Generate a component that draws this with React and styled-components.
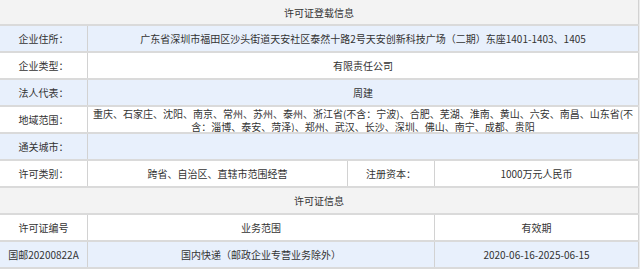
import styled, { createGlobalStyle } from "styled-components";

const GlobalStyle = createGlobalStyle`
  html, body {
    margin: 0;
    padding: 0;
    background: #ececec;
  }
  body {
    font-family: "Noto Sans CJK SC", "Microsoft YaHei", sans-serif;
    color: #333;
  }
`;

const cols = {
  full: "639px",
  two: "88px 551px",
  three: "88px 347px 204px",
  four: "88px 260px 87px 204px",
};

export default function App() {
  return (
    <>
      <GlobalStyle />
      <Board>
        <Row $cols={cols.full} $tone="head" $height={24}>
          <Cell>许可证登载信息</Cell>
        </Row>
        <Row $cols={cols.two} $tone="blue">
          <Cell>企业住所：</Cell>
          <Cell>
            广东省深圳市福田区沙头街道天安社区泰然十路2号天安创新科技广场（二期）东座1401-1403、1405
          </Cell>
        </Row>
        <Row $cols={cols.two}>
          <Cell>企业类型：</Cell>
          <Cell>有限责任公司</Cell>
        </Row>
        <Row $cols={cols.two} $tone="blue">
          <Cell>法人代表：</Cell>
          <Cell>周建</Cell>
        </Row>
        <Row $cols={cols.two}>
          <Cell>地域范围：</Cell>
          <Cell $lines>
            <Line>
              重庆、石家庄、沈阳、南京、常州、苏州、泰州、浙江省(不含：宁波)、合肥、芜湖、淮南、黄山、六安、南昌、山东省(不
            </Line>
            <Line>
              含：淄博、泰安、菏泽)、郑州、武汉、长沙、深圳、佛山、南宁、成都、贵阳
            </Line>
          </Cell>
        </Row>
        <Row $cols={cols.two} $tone="blue">
          <Cell>通关城市：</Cell>
          <Cell />
        </Row>
        <Row $cols={cols.four}>
          <Cell>许可类别：</Cell>
          <Cell>跨省、自治区、直辖市范围经营</Cell>
          <Cell>注册资本：</Cell>
          <Cell>1000万元人民币</Cell>
        </Row>
        <Row $cols={cols.full} $tone="head">
          <Cell>许可证信息</Cell>
        </Row>
        <Row $cols={cols.three}>
          <Cell>许可证编号</Cell>
          <Cell>业务范围</Cell>
          <Cell>有效期</Cell>
        </Row>
        <Row $cols={cols.three} $tone="blue">
          <Cell>国邮20200822A</Cell>
          <Cell>国内快递（邮政企业专营业务除外）</Cell>
          <Cell>2020-06-16-2025-06-15</Cell>
        </Row>
      </Board>
    </>
  );
}

const tones = {
  head: "#f3f3f3",
  blue: "#e8f0fc",
  white: "#ffffff",
};

const Board = styled.div`
  display: flex;
  flex-direction: column;
  width: 639px;
  margin-left: -1px;
  border-left: 1px solid #d2d2d2;
  font-size: 10px;
`;

const Row = styled.div`
  display: grid;
  grid-template-columns: ${(p) => p.$cols};
  height: ${(p) => p.$height || 25}px;
  background: ${(p) => tones[p.$tone || "white"]};
  border-bottom: 2px solid #dadada;
`;

const Cell = styled.div`
  display: flex;
  flex-direction: ${(p) => (p.$lines ? "column" : "row")};
  align-items: center;
  justify-content: center;
  border-right: 1px solid #d2d2d2;
  padding: 0 4px;
  white-space: nowrap;
  overflow: hidden;
  line-height: 13px;
`;

const Line = styled.span`
  display: block;
  text-align: center;
`;
